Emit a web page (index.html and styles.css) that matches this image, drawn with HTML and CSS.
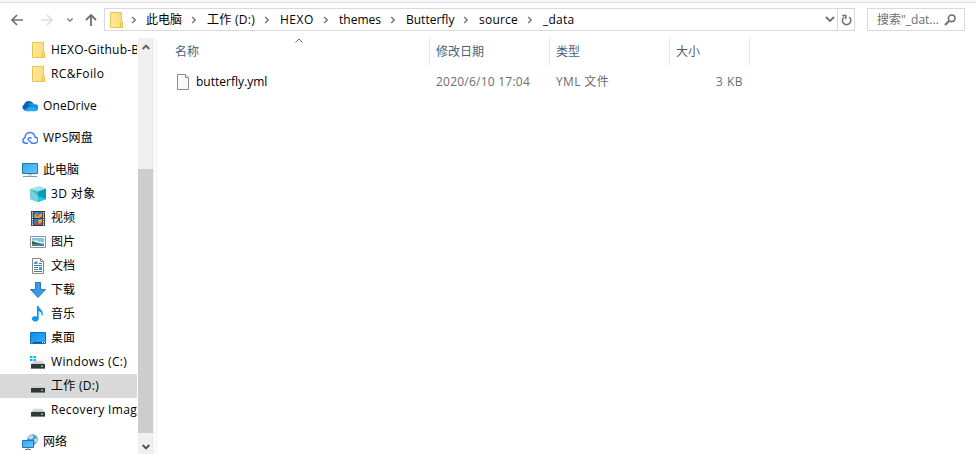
FILE: index.html
```
<!DOCTYPE html>
<html lang="zh-CN">
<head>
<meta charset="utf-8">
<title>_data</title>
<link rel="stylesheet" href="styles.css">
</head>
<body>
<svg class="defs" width="0" height="0" aria-hidden="true">
  <defs>
    <linearGradient id="gold" x2="1"><stop offset="0" stop-color="#ffe99a"/><stop offset="1" stop-color="#fbdc7d"/></linearGradient>
    <linearGradient id="blue" x2="1" y2="1"><stop offset="0" stop-color="#36a4f3"/><stop offset="1" stop-color="#66c9fd"/></linearGradient>
    <linearGradient id="desk" x2="1" y2="1"><stop offset="0" stop-color="#0c8bea"/><stop offset="1" stop-color="#35aef9"/></linearGradient>
    <linearGradient id="metal" y2="1" x2="0"><stop offset="0" stop-color="#e4e5e6"/><stop offset="1" stop-color="#b9bbbd"/></linearGradient>
    <symbol id="folder" viewBox="0 0 16 16"><path d="M2.500.5h11v9l1 1v5h-12z" fill="url(#gold)" stroke="#edc54e"/><path d="M12.500 15.500v-5l1-1 1 1v5z" fill="#ffe58b" stroke="#e8bd42"/></symbol>
    <symbol id="chev" viewBox="0 0 6 8"><path d="M1.200 1l3 3-3 3" fill="none" stroke="#777" stroke-width="1.500"/></symbol>
    <symbol id="drive" viewBox="0 0 16 16"><path d="M3.500 6.500h9L15 11H1z" fill="url(#metal)"/><path d="M1 10h14v4.500H1z" fill="#35383b"/><path d="M1 14h14v.8H1z" fill="#777"/><path d="M11 11.500h2V13h-2z" fill="#3bea55"/></symbol>
  </defs>
</svg>
<div class="window">
  <header class="toolbar">
    <nav class="history">
      <svg class="back" width="12" height="12" viewBox="0 0 12 12"><path d="M12 6H1M6 1L1 6l5 5" fill="none" stroke="#707070" stroke-width="1.700"/></svg>
      <svg class="forward" width="12" height="12" viewBox="0 0 12 12"><path d="M0 6h11M6 1l5 5-5 5" fill="none" stroke="#dedede" stroke-width="1.700"/></svg>
      <svg class="recent" width="6" height="4" viewBox="0 0 6 4"><path d="M.3.500L3 3.100 5.700.500" fill="none" stroke="#888" stroke-width="1.500"/></svg>
      <svg class="up" width="12" height="12" viewBox="0 0 12 12"><path d="M6 12V1M1 6l5-5 5 5" fill="none" stroke="#707070" stroke-width="1.800"/></svg>
    </nav>
    <div class="address">
      <svg class="address-icon" width="16" height="16"><use href="#folder"/></svg>
      <span class="sep"><svg width="6" height="8"><use href="#chev"/></svg></span>
      <span class="crumb w36">此电脑</span>
      <span class="sep"><svg width="6" height="8"><use href="#chev"/></svg></span>
      <span class="crumb w48 ls3">工作 (D:)</span>
      <span class="sep"><svg width="6" height="8"><use href="#chev"/></svg></span>
      <span class="crumb w34 ls5">HEXO</span>
      <span class="sep"><svg width="6" height="8"><use href="#chev"/></svg></span>
      <span class="crumb w42">themes</span>
      <span class="sep"><svg width="6" height="8"><use href="#chev"/></svg></span>
      <span class="crumb w48">Butterfly</span>
      <span class="sep"><svg width="6" height="8"><use href="#chev"/></svg></span>
      <span class="crumb w39 ls2">source</span>
      <span class="sep"><svg width="6" height="8"><use href="#chev"/></svg></span>
      <span class="crumb w31 ls2">_data</span>
      <svg class="drop" width="10" height="7" viewBox="0 0 10 7"><path d="M1 1l4 4 4-4" fill="none" stroke="#707070" stroke-width="1.800"/></svg>
      <span class="refresh"><svg width="11" height="12" viewBox="0 0 11 12"><path d="M3.200 3A4.200 4.200 0 1 0 8 3" fill="none" stroke="#707070" stroke-width="1.500"/><path d="M1.200 1.500h3.600v3.800" fill="none" stroke="#707070" stroke-width="1.500"/></svg></span>
    </div>
    <div class="search"><span>搜索"_dat...</span><svg width="12" height="12" viewBox="0 0 12 12"><circle cx="7.700" cy="4.300" r="3.300" fill="none" stroke="#707070" stroke-width="1.600"/><path d="M5.300 6.700L1 11" stroke="#707070" stroke-width="2"/></svg></div>
  </header>
  <div class="body">
    <aside class="tree">
      <div class="item child"><svg width="16" height="16"><use href="#folder"/></svg><span class="ls2">HEXO-Github-B</span></div>
      <div class="item child"><svg width="16" height="16"><use href="#folder"/></svg><span class="ls4">RC&amp;Foilo</span></div>
      <div class="item group"><svg width="16" height="16" viewBox="0 0 16 16"><path d="M2.500 12A3 3 0 0 1 2 6.500 5.200 5.200 0 0 1 11 5l2 3-8 5z" fill="#0864b5"/><path d="M6 6.500a4 4 0 0 1 6.500 0A3.200 3.200 0 0 1 15.500 12z" fill="#1490df"/><path d="M2 12.500L8 8.300l7.700 3a2 2 0 0 1-1.700 1.900H4z" fill="#28a8ea"/></svg><span class="ls1">OneDrive</span></div>
      <div class="item group"><svg width="16" height="16" viewBox="0 0 16 16"><path d="M6 13.200H3.500A2.800 2.800 0 0 1 3 7.700 5 5 0 0 1 13 7.200a3 3 0 0 1 0 6H9.800L6.200 9.700a1.800 1.800 0 0 1 3.300-1.200" fill="none" stroke="#417ff0" stroke-width="1.500"/></svg><span class="ls2">WPS网盘</span></div>
      <div class="item group"><svg width="16" height="16" viewBox="0 0 16 16"><path d="M.5 1.500h15v10H.5z" fill="url(#blue)" stroke="#2279ae"/><path d="M6 12h4v1.500H6z" fill="#bcc7cf"/><path d="M1 14.500h14" stroke="#8498a6"/></svg><span>此电脑</span></div>
      <div class="item child"><svg width="16" height="16" viewBox="0 0 16 16"><path d="M0 3l9-3 7 2.500L8 6z" fill="#9ce4ec"/><path d="M0 3l8 2.500V16l-8-3z" fill="#42bdcd"/><path d="M8 5.500l8-3V13l-8 3z" fill="#079eb5"/><path d="M8 10l8 3-8 3z" fill="#20c8df"/><path d="M0 3l8 7v6l-8-3z" fill="#76d0db"/></svg><span class="ls4">3D 对象</span></div>
      <div class="item child"><svg width="16" height="16" viewBox="0 0 16 16"><path d="M1 1h14v15H1z" fill="#393939"/><path d="M4 2h8v6H4zM4 9h8v6H4z" fill="#287ac8"/><path d="M4 6l3-3 2 2 3-2v3l-3 2H6zM8 10l4-1v3l-3 2z" fill="#edab2e"/><path d="M6 5l2-1 1 2-2 1zM6 12l3 1v2H5z" fill="#ca482f"/><path d="M2.500 2v14M13.500 2v14" stroke="#fff" stroke-width="1.300" stroke-dasharray="1.300 1"/></svg><span>视频</span></div>
      <div class="item child"><svg width="16" height="16" viewBox="0 0 16 16"><path d="M.5 2.500h15v11H.5z" fill="#fff" stroke="#929292"/><path d="M2 4h12v8H2z" fill="#82c3ee"/><path d="M2 7q4-2 7 1 3-1 5 1v3H2z" fill="#e5f2f6"/><path d="M2 7l3 1 3 1 6 1H2z" fill="#286750"/><path d="M2 10h12v2H2z" fill="#4a7e9c"/></svg><span>图片</span></div>
      <div class="item child"><svg width="16" height="16" viewBox="0 0 16 16"><path d="M2.500.500h8l3 3v12h-11z" fill="#fff" stroke="#878787"/><path d="M10.500.500v3h3" fill="none" stroke="#878787"/><path d="M4 5h4M9 5.500h3M4 7.500h8M4 9.500h4M4 11.500h4M4 13.500h8" stroke="#477e9c"/><path d="M5 4l2-1v3H4zM9 9h3v3H9z" fill="#3598d7"/></svg><span>文档</span></div>
      <div class="item child"><svg width="16" height="16" viewBox="0 0 16 16"><path d="M5.500.500h5v7h5L8 15.500.500 7.500h5z" fill="#399ae9" stroke="#2678ba"/></svg><span>下载</span></div>
      <div class="item child"><svg width="16" height="16" viewBox="0 0 16 16"><path d="M7 0h1.700c0 3 5 3.700 4 9l-1 1c.3-3-1-4-3-5v8a3.400 2.700 0 1 1-1.700-2.500z" fill="#0a97ef"/></svg><span>音乐</span></div>
      <div class="item child"><svg width="16" height="16" viewBox="0 0 16 16"><path d="M.5 2.500h15v11H.5z" fill="url(#desk)" stroke="#0871bd"/><path d="M1 12.500h14" stroke="#064f8c"/><path d="M1.500 12.500h1M12 12.500h1m1 0h1" stroke="#fff"/></svg><span>桌面</span></div>
      <div class="item child"><svg width="16" height="16" viewBox="0 0 16 16"><use href="#drive"/><path d="M0 2h2.500v2H0zm3.500 0H6v2H3.500zM0 5h2.500v2H0zm3.500 0H6v2H3.500z" fill="#00b9ed"/></svg><span class="ls4">Windows (C:)</span></div>
      <div class="item child selected"><svg width="16" height="16"><use href="#drive"/></svg><span class="ls3">工作 (D:)</span></div>
      <div class="item child"><svg width="16" height="16"><use href="#drive"/></svg><span class="ls4">Recovery Imag</span></div>
      <div class="item group"><svg width="16" height="16" viewBox="0 0 16 16"><circle cx="10.500" cy="5.500" r="5.300" fill="#4b9bc5"/><path d="M6 3l3-2 3 1-2 3H7zM12 5l3-1v4l-2 1z" fill="#b8dfe9"/><path d="M.5 6.500h11v7H.5z" fill="url(#blue)" stroke="#2679ae"/><path d="M6 14v1M3 15.500h6" stroke="#568eab"/></svg><span>网络</span></div>
    </aside>
    <div class="scrollbar">
      <svg class="arrow" width="8" height="6" viewBox="0 0 8 6"><path d="M.7 5L4 1.700 7.300 5" fill="none" stroke="#606060" stroke-width="1.900"/></svg>
      <div class="thumb"></div>
      <svg class="arrow" width="8" height="6" viewBox="0 0 8 6"><path d="M.7 1L4 4.300 7.300 1" fill="none" stroke="#505050" stroke-width="1.900"/></svg>
    </div>
    <main class="files">
      <div class="row head">
        <span class="name">名称<svg class="sort" width="8" height="5" viewBox="0 0 8 5"><path d="M.5 4.500L4 1l3.500 3.500" fill="none" stroke="#666"/></svg></span>
        <span>修改日期</span><span>类型</span><span>大小</span>
      </div>
      <div class="row file">
        <span class="name"><svg width="13" height="16" viewBox="0 0 13 16"><path d="M.5.500h8l3 3v12H.5z" fill="#f9f9f9" stroke="#8a8a8a"/><path d="M8.500.500v3h3" fill="#fff" stroke="#8a8a8a"/></svg><b>butterfly.yml</b></span>
        <span class="ls2">2020/6/10 17:04</span><span class="ls4">YML 文件</span><span class="size ls5">3 KB</span>
      </div>
    </main>
  </div>
</div>
</body>
</html>
```
FILE: styles.css
```
* { box-sizing: border-box; }
body { margin: 0; background: #fff; color: #000; font: 12px/24px "Open Sans", "Noto Sans CJK SC", sans-serif; overflow: hidden; }
svg { display: block; flex: none; }
.defs { position: absolute; }
.window { width: 976px; height: 454px; display: flex; flex-direction: column; border-top: 2px solid #f5f6f7; }
.toolbar { height: 36px; flex: none; display: flex; border-top: 1px solid #d9dbdd; padding: 5px 11px 0 0; }
.history { width: 104px; height: 23px; display: flex; align-items: center; padding-left: 11px; }
.forward { margin-left: 18px; }
.recent { margin-left: 14px; }
.up { margin-left: 12px; }
.address { width: 751px; height: 23px; border: 1px solid #d9d9d9; display: flex; align-items: center; white-space: nowrap; }
.address-icon { margin-left: 3px; }
.sep { width: 25px; height: 20px; flex: none; display: flex; align-items: center; justify-content: center; padding-right: 2px; }
.address-icon + .sep { width: 22px; }
.crumb { line-height: 20px; flex: none; height: 20px; }
.w31 { width: 31px; } .w34 { width: 34px; } .w36 { width: 36px; } .w39 { width: 39px; } .w42 { width: 42px; } .w48 { width: 48px; }
.ls1 { letter-spacing: .12px; } .ls2 { letter-spacing: .23px; } .ls3 { letter-spacing: .3px; } .ls4 { letter-spacing: .36px; } .ls5 { letter-spacing: .5px; }
.drop { margin-left: auto; margin-right: 2px; }
.refresh { width: 17px; height: 21px; display: flex; align-items: center; justify-content: center; border-left: 1px solid #d9d9d9; }
.search { width: 98px; height: 23px; margin-left: 12px; border: 1px solid #d9d9d9; display: flex; align-items: center; justify-content: space-between; padding: 0 8px 0 9px; color: #6d6d6d; line-height: 21px; white-space: nowrap; }
.body { display: flex; flex: 1; min-height: 0; }
.tree { width: 137px; flex: none; overflow: hidden; }
.item { height: 24px; display: flex; align-items: center; gap: 5px; padding-left: 22px; white-space: nowrap; }
.child { padding-left: 30px; }
.group { margin-top: 8px; }
.selected { background: #d9d9d9; }
.scrollbar { width: 16px; flex: none; margin-left: 1px; background: #f0f0f0; display: flex; flex-direction: column; align-items: center; justify-content: space-between; padding: 6px 1px 4px 0; }
.thumb { width: 15px; height: 264px; background: #cdcdcd; margin-top: 108px; }
.files { flex: 1; border-left: 1px solid #f3f3f3; margin-left: 2px; }
.row { display: grid; grid-template-columns: 273px 120px 120px 80px; }
.head { height: 27px; color: #4c607a; line-height: 27px; }
.head > span { border-right: 1px solid #e5e5e5; padding-left: 6px; }
.head > .name { padding-left: 18px; position: relative; }
.sort { position: absolute; left: 138px; top: 0; }
.file { height: 24px; margin-top: 5px; color: #6d6d6d; }
.file > span { padding-left: 6px; }
.file > .name { display: flex; align-items: center; gap: 6px; padding-left: 20px; color: #000; }
.file b { font-weight: 400; }
.file .size { text-align: right; padding-right: 7px; }
```
